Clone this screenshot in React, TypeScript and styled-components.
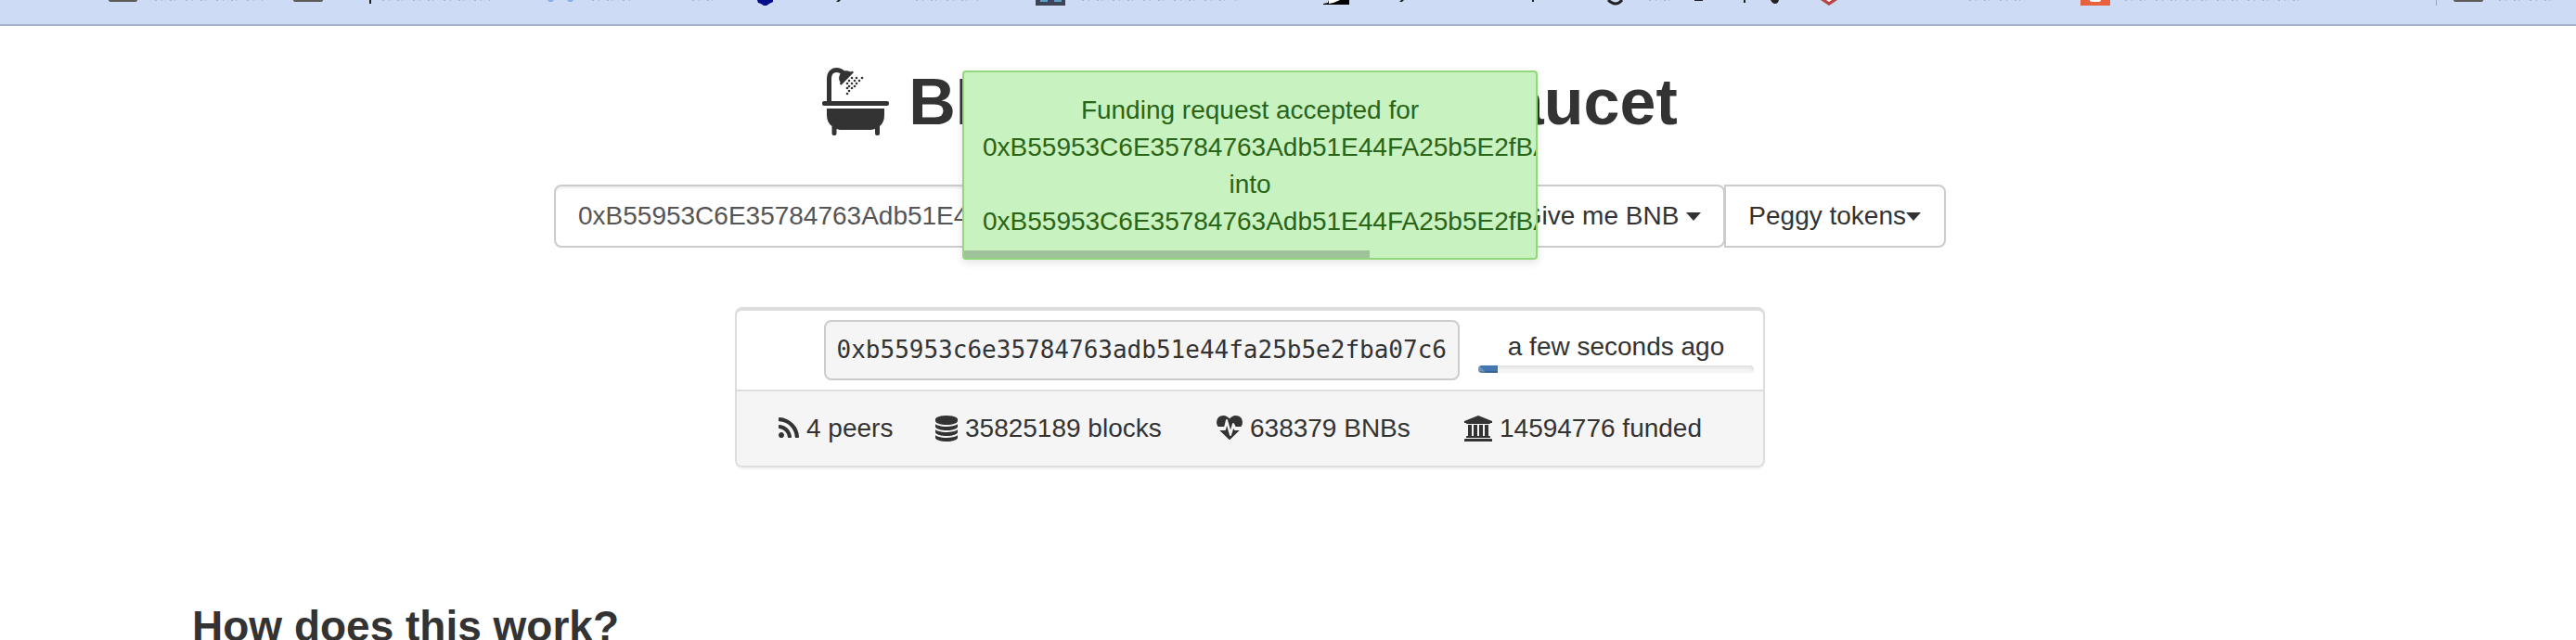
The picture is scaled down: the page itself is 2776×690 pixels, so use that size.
import React from "react";
import styled, { createGlobalStyle } from "styled-components";

const GlobalStyle = createGlobalStyle`
  *, *::before, *::after { box-sizing: border-box; }
  body {
    margin: 0;
    overflow: hidden;
    background: #fff;
    color: #333;
    font: 28px/40px "Liberation Sans", Arial, sans-serif;
  }
`;

const BookmarkBar = styled.div`
  display: flex;
  height: 28px;
  padding-left: 117px;
  overflow: hidden;
  background: #cddbf4;
  border-bottom: 2px solid #a5b2ca;
`;

const Bookmark = styled.svg<{ $span: number }>`
  display: block;
  flex: 0 0 ${(p) => p.$span}px;
  width: ${(p) => p.$span}px;
  height: 8px;
`;

const Page = styled.main`
  padding: 34px 82px 0 0;
`;

const Container = styled.div`
  max-width: 2340px;
  margin: 0 auto;
  padding: 0 30px;
`;

const Title = styled.h1`
  display: flex;
  justify-content: center;
  align-items: center;
  gap: 21px;
  margin: 0;
  font-size: 70px;
  line-height: 96px;
  font-weight: 700;
`;

const BathIcon = styled.svg`
  width: 72px;
  height: 73px;
  margin-bottom: 2px;
`;

const Form = styled.form`
  display: flex;
  max-width: 1500px;
  height: 68px;
  margin: 41px auto 0;
`;

const AddressInput = styled.input`
  flex: 1;
  min-width: 0;
  padding: 0 24px;
  border: 2px solid #ccc;
  border-radius: 8px 0 0 8px;
  box-shadow: inset 0 2px 2px rgba(0, 0, 0, 0.075);
  background: #fff;
  color: #555;
  font: inherit;
`;

const MenuButton = styled.button<{ $gap: number }>`
  display: flex;
  align-items: center;
  gap: ${(p) => p.$gap}px;
  margin-left: -2px;
  padding: 0 24px;
  border: 2px solid #ccc;
  border-radius: 0 8px 8px 0;
  background: #fff;
  color: #333;
  font: inherit;
  white-space: nowrap;

  & + & {
    margin-left: -1px;
    padding-right: 25px;
  }

  &::after {
    content: "";
    border-top: 9px solid #333;
    border-left: 8px solid transparent;
    border-right: 8px solid transparent;
  }
`;

const Card = styled.section`
  max-width: 1110px;
  margin: 64px auto 0;
  border: 2px solid #ddd;
  border-top-width: 4px;
  border-radius: 8px;
  box-shadow: 0 2px 2px rgba(0, 0, 0, 0.05);
  overflow: hidden;
`;

const Request = styled.div`
  display: flex;
  justify-content: flex-end;
  align-items: center;
  gap: 20px;
  padding: 10px;
`;

const Account = styled.pre`
  margin: 0;
  padding: 12px;
  border: 2px solid #ccc;
  border-radius: 8px;
  background: #f5f5f5;
  font: 26px/37px "DejaVu Sans Mono", monospace;
`;

const Age = styled.div`
  width: 297px;
  text-align: center;
`;

const Track = styled.div`
  height: 8px;
  border-radius: 4px;
  overflow: hidden;
  background: #f5f5f5;
  box-shadow: inset 0 2px 4px rgba(0, 0, 0, 0.1);
`;

const Fill = styled.div`
  height: 100%;
  background: linear-gradient(45deg, #6d94c4 0 30%, #4476b2 30%);
  box-shadow: inset 0 -2px 0 rgba(0, 0, 0, 0.15);
`;

const Stats = styled.ul`
  display: grid;
  grid-template-columns: 169fr 303fr 267fr 322fr;
  margin: 0;
  padding: 20px 0 20px 45px;
  border-top: 2px solid #ddd;
  background: #f5f5f5;
  list-style: none;
`;

const Stat = styled.li`
  display: flex;
  align-items: center;
  gap: 8px;
  white-space: nowrap;
`;

const StatIcon = styled.svg`
  height: 28px;
  fill: #333;
`;

const Heading = styled.h3`
  margin: 145px 0 0;
  font-size: 46px;
  line-height: 52px;
`;

const Toast = styled.div`
  position: absolute;
  top: 76px;
  left: calc(50% - 41px);
  width: 620px;
  margin-left: -310px;
  padding: 21px 20px 19px;
  overflow: hidden;
  border: 2px solid #91d87d;
  border-radius: 4px;
  background: #c8f2c0;
  color: #2a6417;
  text-align: center;
  box-shadow: 0 4px 8px rgba(0, 0, 0, 0.1);
`;

const ToastTimer = styled.div`
  position: absolute;
  left: 0;
  bottom: 0;
  width: 71%;
  height: 8px;
  background: #9fc29a;
`;

const ADDRESS = "0xB55953C6E35784763Adb51E44FA25b5E2fBA07C6";

const icons = {
  rss: {
    box: "192 0 1408 1792",
    d: "M576 1344q0 80-56 136t-136 56-136-56-56-136 56-136 136-56 136 56 56 136zm512 123q2 28-17 48-18 21-47 21h-135q-25 0-43-16.500t-20-41.500q-22-229-184.500-391.500t-391.500-184.500q-25-2-41.500-20t-16.500-43v-135q0-29 21-47 17-17 43-17h5q160 13 306 80.500t259 181.500q114 113 181.500 259t80.500 306zm512 2q2 27-18 47-18 20-46 20h-143q-26 0-44.500-17.500t-19.500-42.500q-12-215-101-408.500t-231.500-336-336-231.500-408.500-102q-25-1-42.500-19.500t-17.500-43.500v-143q0-28 20-46 18-18 44-18h3q262 13 501.500 120t425.500 294q187 186 294 425.500t120 501.500z",
  },
  database: {
    box: "128 0 1536 1792",
    d: "M896 768q237 0 443-43t325-127v170q0 69-103 128t-280 93.500-385 34.500-385-34.500-280-93.500-103-128v-170q119 84 325 127t443 43zm0 768q237 0 443-43t325-127v170q0 69-103 128t-280 93.500-385 34.500-385-34.500-280-93.500-103-128v-170q119 84 325 127t443 43zm0-384q237 0 443-43t325-127v170q0 69-103 128t-280 93.500-385 34.500-385-34.500-280-93.500-103-128v-170q119 84 325 127t443 43zm0-1152q208 0 385 34.500t280 93.500 103 128v128q0 69-103 128t-280 93.500-385 34.500-385-34.500-280-93.500-103-128v-128q0-69 103-128t280-93.500 385-34.500z",
  },
  heartbeat: {
    box: "0 0 1792 1792",
    d: "M1280 1024h305q-5 6-10 10.500t-9 7.500l-3 4-623 600q-18 18-44 18t-44-18l-624-602q-5-2-21-20h369q22 0 39.500-13.500t22.500-34.500l70-281 190 667q6 20 23 33t39 13q21 0 38-13t23-33l146-485 56 112q18 35 57 35zm512-556q0 145-103 300h-369l-111-221q-8-17-25.500-27t-36.500-8q-45 5-56 46l-129 430-196-686q-6-20-23.500-33t-39.500-13-39 13.500-22 34.500l-116 464h-423q-103-155-103-300 0-220 127-344t351-124q62 0 126.500 21.500t120 58 95.500 68.500 76 68q36-36 76-68t95.500-68.500 120-58 126.500-21.500q224 0 351 124t127 344z",
  },
  university: {
    box: "0 0 1920 1792",
    d: "M960 0l960 384v128h-128q0 26-20.500 45t-48.500 19h-1526q-28 0-48.500-19t-20.500-45h-128v-128zm-704 640h256v768h128v-768h256v768h128v-768h256v768h128v-768h256v768h59q28 0 48.500 19t20.500 45v64h-1664v-64q0-26 20.500-45t48.500-19h59v-768zm1595 960q28 0 48.500 19t20.500 45v128h-1920v-128q0-26 20.500-45t48.500-19h1782z",
  },
};

const stats: { icon: keyof typeof icons; label: string }[] = [
  { icon: "rss", label: "4 peers" },
  { icon: "database", label: "35825189 blocks" },
  { icon: "heartbeat", label: "638379 BNBs" },
  { icon: "university", label: "14594776 funded" },
];

// Centres of the water drops under the shower head
const drops = [
  [32, 11], [37, 11], [43, 11],
  [29, 14], [35, 14], [40, 14],
  [27, 17], [32, 17], [37, 17],
  [29, 20], [35, 20],
  [27, 22], [32, 22],
  [29, 25],
  [27, 28],
];

const Tail = ({ x, to }: { x: number; to: number }) => (
  <path d={`M${x} .5H${to}`} stroke="#a9b6cf" strokeDasharray="2 5 1 8 2 3 1 11" />
);

const bookmarks: { span: number; art: React.ReactNode }[] = [
  { span: 199, art: <><path d="M0 0h31q0 2-3 2H3Q0 2 0 0" fill="#5c5b57" /><Tail x={50} to={166} /></> },
  { span: 274, art: <><path d="M0 0h32q0 2-3 2H3Q0 2 0 0" fill="#5c5b57" /><path d="M82 0h2v4h-2z" fill="#222" /><Tail x={96} to={212} /></> },
  { span: 226, art: <><path d="M0 0h7l-2 2H2zM21 0h7l-2 2h-3z" fill="#86aef2" /><Tail x={48} to={92} /><Tail x={156} to={188} /></> },
  { span: 300, art: <><path d="M0 0h17v2l-4 2-3 2H7L4 4 1 3z" fill="#000e8c" /><path d="M87 0h3l-2 2h-3z" fill="#222" /><Tail x={171} to={238} /></> },
  { span: 310, art: <><path d="M0 0h32v6H0z" fill="#3d4557" /><path d="M5 0h8v2H5zM20 0h8v2h-8z" fill="#5d9fca" /><Tail x={50} to={216} /></> },
  { span: 305, art: <><path d="M6 0h22v5H0V4l5-1z" fill="#000" /><path d="M6 0h12l-7 3-5 1z" fill="#fff" /><path d="M84 0h3l-2 2h-3zM225 0h2v2h-2z" fill="#222" /></> },
  { span: 231, art: <><path d="M2 0q8 8 15 0" fill="none" stroke="#222" strokeWidth="3" /><Tail x={46} to={72} /><path d="M95 0h9v1h-9zM148 0h2v3h-2zM177 0h9q-1 4-4 4t-5-4" fill="#222" /></> },
  { span: 280, art: <><path d="M0 0h18l-9 6z" fill="#b94444" /><path d="M6 0h6l-3 2z" fill="#fff" /><Tail x={160} to={226} /></> },
  { span: 383, art: <><path d="M0 0h32v6H0z" fill="#e9603d" /><path d="M10 0h12v1l-2 1h-8l-2-1z" fill="#fff" /><Tail x={48} to={240} /></> },
  { span: 150, art: <><path d="M-1 0h2v6h-2z" fill="#98a4ba" /><path d="M19 0h32q0 2-3 2H22q-3 0-3-2" fill="#5c5b57" /><Tail x={68} to={130} /></> },
];

export default function App() {
  return (
    <>
      <GlobalStyle />
      <BookmarkBar aria-hidden="true">
        {bookmarks.map((b, i) => (
          <Bookmark key={i} $span={b.span}>{b.art}</Bookmark>
        ))}
      </BookmarkBar>
      <Page>
        <Container>
          <Title>
            <BathIcon viewBox="0 0 72 73" fill="#333" aria-hidden="true">
              <path d="M7.500 37V12C7.500 6 11 2.500 15.500 2.500c3 0 5 1 7 3" fill="none" stroke="#333" strokeWidth="5" />
              <path d="M18.500 9C20 4.500 23 3 27 3.200l4 1.300 1.500-1L34 5 20.500 18.700 19 17.500l.500-2C18 13.500 17.800 11 18.500 9z" />
              <rect y="36" width="72" height="5" rx="2" />
              <path d="M5 44h62v7q0 8-5 12v8q0 2-2 2h-1q-2 0-2-2v-5l-4 1H19l-3.500-1v5q0 2-2 2h-1q-2 0-2-2v-8Q5 59 5 51z" />
              {drops.map(([x, y]) => <circle key={`${x}-${y}`} cx={x} cy={y} r="1.300" />)}
            </BathIcon>
            BNB Smart Chain Faucet
          </Title>
          <Form onSubmit={(e) => e.preventDefault()}>
            <AddressInput aria-label="Account address" defaultValue={ADDRESS} />
            <MenuButton type="button" $gap={8}>Give me BNB</MenuButton>
            <MenuButton type="button" $gap={0}>Peggy tokens</MenuButton>
          </Form>
          <Card>
            <Request>
              <Account>{ADDRESS.toLowerCase()}</Account>
              <Age>
                a few seconds ago
                <Track><Fill style={{ width: "7%" }} /></Track>
              </Age>
            </Request>
            <Stats>
              {stats.map((s) => (
                <Stat key={s.icon}>
                  <StatIcon viewBox={icons[s.icon].box} aria-hidden="true">
                    <path d={icons[s.icon].d} />
                  </StatIcon>
                  {s.label}
                </Stat>
              ))}
            </Stats>
          </Card>
          <Heading>How does this work?</Heading>
        </Container>
      </Page>
      <Toast role="status">
        Funding request accepted for {ADDRESS} into {ADDRESS}
        <ToastTimer />
      </Toast>
    </>
  );
}
